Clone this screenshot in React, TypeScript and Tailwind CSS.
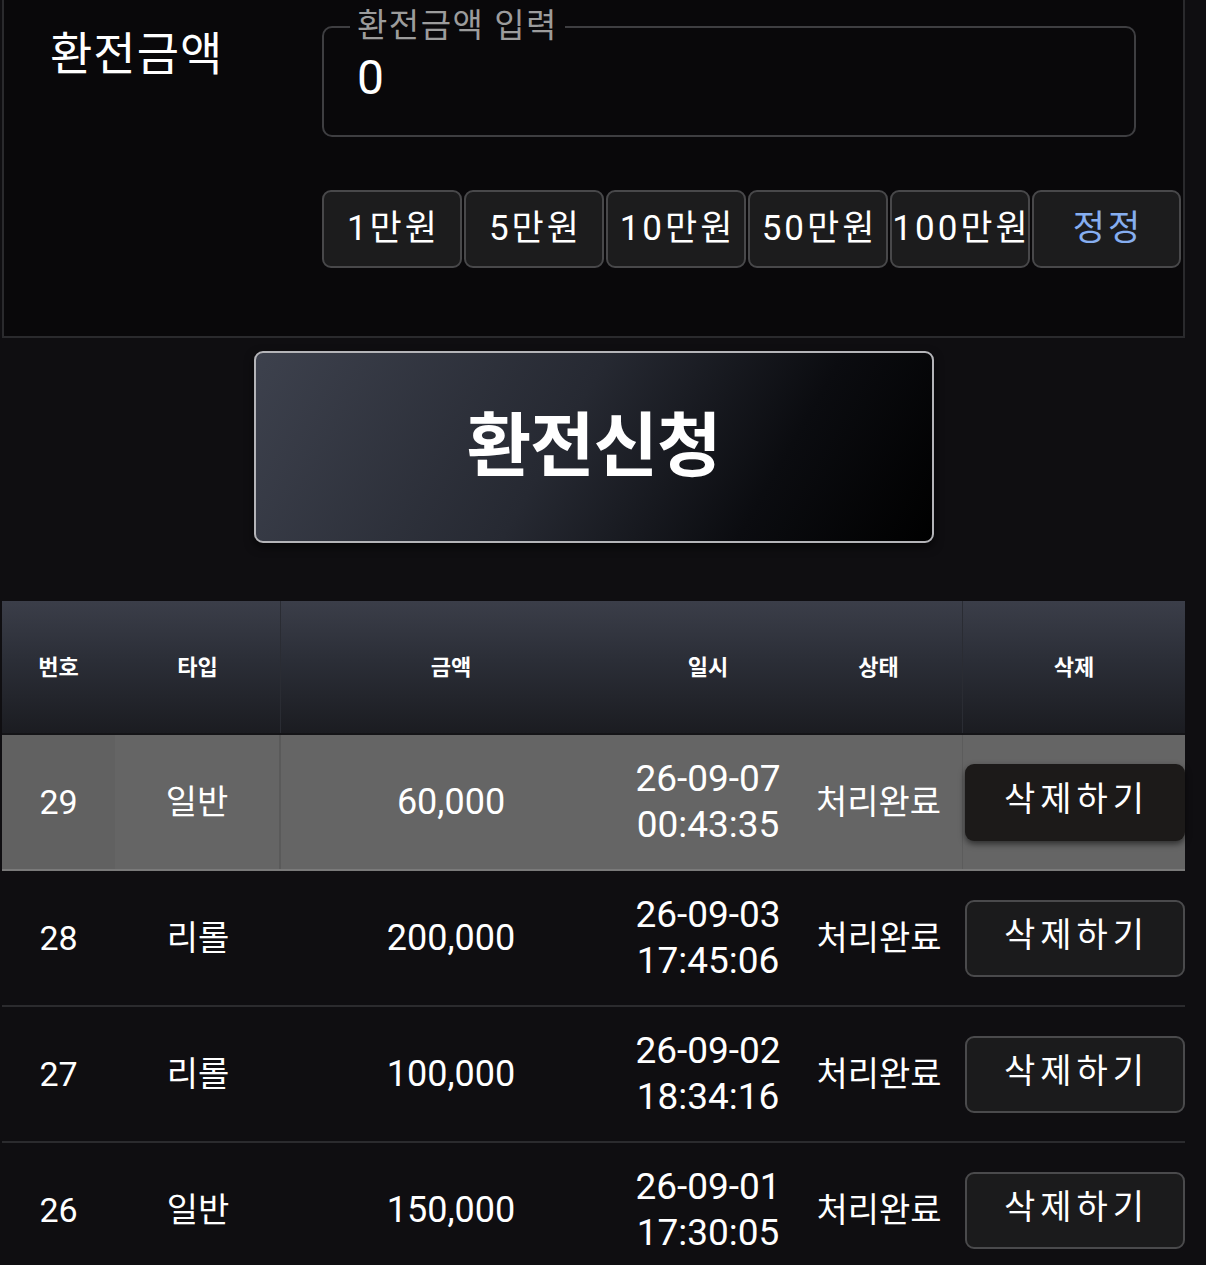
import React from 'react';

const AMOUNT_BUTTONS = ['1만원', '5만원', '10만원', '50만원', '100만원'];

const COLUMNS = ['번호', '타입', '금액', '일시', '상태', '삭제'];

const ROWS = [
  { id: 29, type: '일반', amount: '60,000', date: '26-09-07', time: '00:43:35', status: '처리완료', active: true },
  { id: 28, type: '리롤', amount: '200,000', date: '26-09-03', time: '17:45:06', status: '처리완료', active: false },
  { id: 27, type: '리롤', amount: '100,000', date: '26-09-02', time: '18:34:16', status: '처리완료', active: false },
  { id: 26, type: '일반', amount: '150,000', date: '26-09-01', time: '17:30:05', status: '처리완료', active: false },
];

const GRID = 'grid grid-cols-[113px_166px_340px_174px_168px_222px]';

export default function App() {
  return (
    <div className="min-h-screen w-[1206px] overflow-hidden bg-[#0f0e11] text-white font-['Roboto','Noto_Sans_CJK_KR',sans-serif]">
      <div className="ml-[2px] w-[1183px]">
        {/* Amount panel */}
        <section className="flex h-[338px] border-x-2 border-b-2 border-[#2a2a2d] bg-[#09080a]">
          <div className="w-[318px] shrink-0 pl-[46px] pt-[26px]">
            <h2 className="text-[46px] leading-[56px] tracking-[1px] text-white">환전금액</h2>
          </div>
          <div className="flex flex-col">
            <div className="relative mt-[26px] h-[111px] w-[814px] rounded-[10px] border-2 border-[#3e3e41] pl-[33px] pt-[22px]">
              <span className="absolute -top-[21px] left-[26px] bg-[#09080a] px-[7px] text-[33px] leading-[38px] tracking-[1.5px] text-[#9c9c9c]">
                환전금액 입력
              </span>
              <div className="text-[48px] leading-[56px] text-white">0</div>
            </div>
            <div className="mt-[53px] flex gap-[2px]">
              {AMOUNT_BUTTONS.map((label) => (
                <button
                  key={label}
                  className="flex h-[78px] w-[140px] items-center justify-center whitespace-nowrap rounded-[9px] border-2 border-[#48484a] bg-[#1c1c1d] pl-[3px] text-[35px] tracking-[3px] text-white"
                >
                  {label}
                </button>
              ))}
              <button className="flex h-[78px] w-[149px] items-center justify-center rounded-[9px] border-2 border-[#48484a] bg-[#1c1c1d] pl-[3px] text-[35px] tracking-[3px] text-[#86aef0]">
                정정
              </button>
            </div>
          </div>
        </section>

        {/* Submit */}
        <div className="flex justify-center pt-[13px]">
          <button className="flex h-[192px] w-[680px] items-center justify-center rounded-[9px] border-2 border-[#b4b4b8] bg-[linear-gradient(120deg,#3d414d_0%,#262932_45%,#0b0c10_75%,#000000_100%)] shadow-[0_4px_10px_rgba(0,0,0,0.6)]">
            <span className="text-[70px] font-bold leading-none tracking-[-1px] text-white">환전신청</span>
          </button>
        </div>

        {/* History table */}
        <div className="mt-[58px]">
          <div className={`${GRID} h-[134px] border-b-2 border-[#141417] bg-[linear-gradient(180deg,#3b3e49_0%,#2b2e37_45%,#1b1c21_100%)]`}>
            {COLUMNS.map((col, i) => (
              <div
                key={col}
                className={`flex items-center justify-center text-[22px] font-bold text-white ${
                  i === 1 || i === 4 ? 'border-r border-[#2a2c33]' : ''
                }`}
              >
                {col}
              </div>
            ))}
          </div>

          {ROWS.map((row) => (
            <div
              key={row.id}
              className={`${GRID} h-[136px] text-[34px] ${
                row.active ? 'border-b-2 border-[#7a7a7a] bg-[#656565]' : 'border-b-2 border-[#2b2b2e] bg-[#0f0e11]'
              }`}
            >
              <div className={`flex items-center justify-center ${row.active ? 'bg-[#616161]' : ''}`}>{row.id}</div>
              <div className={`flex items-center justify-center ${row.active ? 'border-r-2 border-[#5a5a5a]' : ''}`}>{row.type}</div>
              <div className="flex items-center justify-center text-[36px]">{row.amount}</div>
              <div className="flex flex-col items-center justify-center text-[37px] leading-[46px]">
                <span>{row.date}</span>
                <span>{row.time}</span>
              </div>
              <div className={`flex items-center justify-center ${row.active ? 'border-r border-[#5c5c5c]' : ''}`}>{row.status}</div>
              <div className="flex items-center justify-center pl-px">
                <button
                  className={`flex h-[77px] w-[220px] items-center justify-center rounded-[9px] pb-[6px] pl-[4px] tracking-[5px] text-white ${
                    row.active
                      ? 'bg-[#1c1a19] shadow-[0_3px_6px_rgba(0,0,0,0.55)]'
                      : 'border-2 border-[#4a4a4c] bg-[#1b1b1c]'
                  }`}
                >
                  삭제하기
                </button>
              </div>
            </div>
          ))}
        </div>
      </div>
    </div>
  );
}
